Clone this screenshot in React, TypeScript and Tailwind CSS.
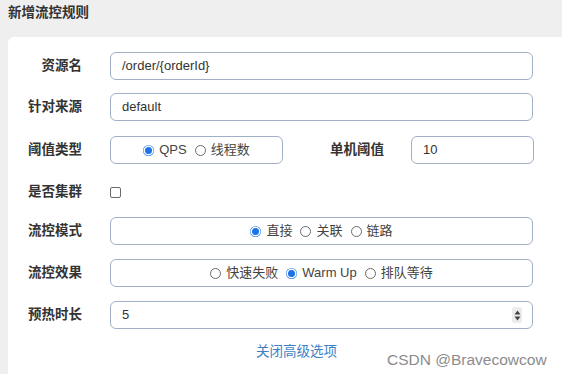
import React from 'react';

const cjk = '"Liberation Sans", "Noto Sans CJK SC", sans-serif';

const Radio = ({ checked, label }: { checked?: boolean; label: string }) => (
  <span className="inline-flex items-center mx-[4px]">
    {checked ? (
      <span className="w-[11px] h-[11px] rounded-full bg-[#1a73e8] border-[2px] border-[#1a73e8] flex items-center justify-center">
        <span className="w-[7px] h-[7px] rounded-full bg-[#1a73e8] ring-[1.5px] ring-white" />
      </span>
    ) : (
      <span className="w-[11px] h-[11px] rounded-full border border-[#6b6b6b] bg-white" />
    )}
    <span className="ml-[5px] text-[13px] text-[#444]">{label}</span>
  </span>
);

const Label = ({ children, className = 'w-[74px]' }: { children: React.ReactNode; className?: string }) => (
  <div className={`${className} text-right text-[13.5px] font-bold text-[#333] shrink-0`}>{children}</div>
);

const box = 'h-[28px] rounded-[6px] border border-[#9fb0c6] bg-white flex items-center';

const App: React.FC = () => {
  return (
    <div className="relative w-[562px] h-[374px] bg-[#efefef] overflow-hidden flex flex-col" style={{ fontFamily: cjk }}>
      <div className="h-[37px] pl-[8px] pt-[3px] text-[13.5px] font-bold text-[#333]">新增流控规则</div>

      <div className="ml-[8px] flex-1 bg-white rounded-tl-[6px] pt-[15px] flex flex-col">
        <div className="flex items-center">
          <Label>资源名</Label>
          <div className={`${box} ml-[28px] w-[423px] px-[11px] text-[13px] text-[#333]`}>/order/{'{orderId}'}</div>
        </div>

        <div className="flex items-center mt-[13px]">
          <Label>针对来源</Label>
          <div className={`${box} ml-[28px] w-[423px] px-[11px] text-[13px] text-[#333]`}>default</div>
        </div>

        <div className="flex items-center mt-[15px]">
          <Label>阈值类型</Label>
          <div className={`${box} ml-[28px] w-[173px] justify-center`}>
            <Radio checked label="QPS" />
            <Radio label="线程数" />
          </div>
          <Label className="w-[101px]">单机阈值</Label>
          <div className={`${box} ml-[27px] w-[123px] px-[11px] text-[13px] text-[#333]`}>10</div>
        </div>

        <div className="flex items-center mt-[14px] h-[28px]">
          <Label>是否集群</Label>
          <span className="ml-[28px] w-[11px] h-[11px] rounded-[2px] border border-[#6b6b6b] bg-white" />
        </div>

        <div className="flex items-center mt-[11px]">
          <Label>流控模式</Label>
          <div className={`${box} ml-[28px] w-[423px] justify-center`}>
            <Radio checked label="直接" />
            <Radio label="关联" />
            <Radio label="链路" />
          </div>
        </div>

        <div className="flex items-center mt-[14px]">
          <Label>流控效果</Label>
          <div className={`${box} ml-[28px] w-[423px] justify-center`}>
            <Radio label="快速失败" />
            <Radio checked label="Warm Up" />
            <Radio label="排队等待" />
          </div>
        </div>

        <div className="flex items-center mt-[14px]">
          <Label>预热时长</Label>
          <div className={`${box} ml-[28px] w-[423px] pl-[11px] pr-[10px] text-[13px] text-[#333] justify-between`}>
            <span>5</span>
            <span className="w-[10px] h-[16px] bg-[#ececec] rounded-[2px] flex items-center justify-center">
              <svg width="7" height="11" viewBox="0 0 7 11">
                <path d="M3.5 0.5 L6.5 4.5 L0.5 4.5 Z" fill="#444" />
                <path d="M3.5 10.5 L6.5 6.5 L0.5 6.5 Z" fill="#444" />
              </svg>
            </span>
          </div>
        </div>

        <div className="mt-[13px] flex">
          <span className="ml-[248px] text-[13.5px] text-[#3d7fc4]">关闭高级选项</span>
        </div>
      </div>

      <div className="absolute left-[387px] top-[348px] text-[15.5px] text-[#8c8c8c]" style={{ fontFamily: '"Liberation Sans", sans-serif' }}>
        CSDN @Bravecowcow
      </div>
    </div>
  );
};

export default App;
